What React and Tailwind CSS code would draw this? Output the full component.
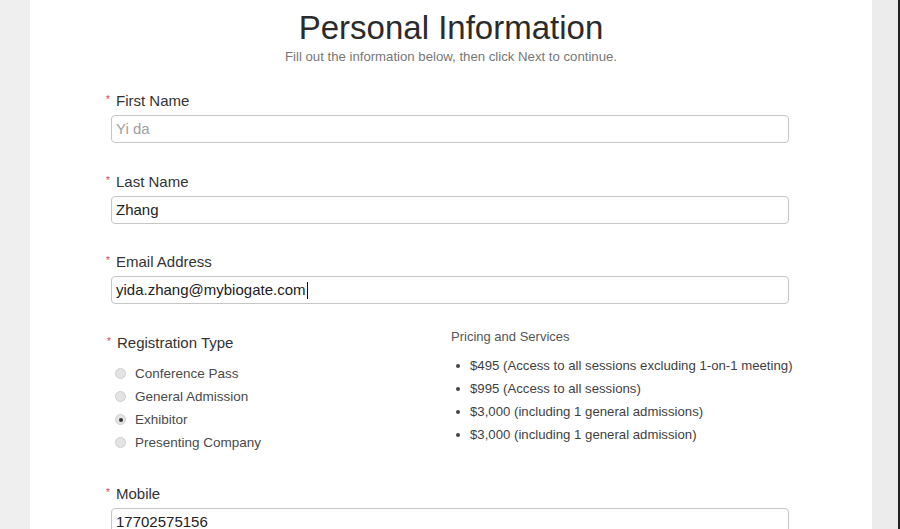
const FONT = { fontFamily: '"Liberation Sans", Arial, sans-serif' };

function Label({ children, extra = "" }) {
  return (
    <div className={`flex items-start h-[20px] leading-[20px] text-[15px] text-[#333] ${extra}`}>
      <span className="w-[10px] -ml-[10px] text-[10px] leading-[12px] text-[#d0464a] pt-[3px]">*</span>
      <span>{children}</span>
    </div>
  );
}

function Field({ label, value, placeholder, caret, className = "" }) {
  return (
    <div className={className}>
      <div className="pl-[5px]">
        <Label>{label}</Label>
      </div>
      <div className="mt-[4px] h-[28px] rounded-[4px] border border-[#c6c6c6] pl-[4px] flex items-center text-[15px] leading-[26px]">
        {value ? (
          <span className="text-[#222]">{value}</span>
        ) : (
          <span className="text-[#a0a0a0]">{placeholder}</span>
        )}
        {caret && <span className="inline-block w-px h-[17px] bg-[#111] ml-px" />}
      </div>
    </div>
  );
}

const regTypes = ["Conference Pass", "General Admission", "Exhibitor", "Presenting Company"];
const pricing = [
  "$495 (Access to all sessions excluding 1-on-1 meeting)",
  "$995 (Access to all sessions)",
  "$3,000 (including 1 general admissions)",
  "$3,000 (including 1 general admission)",
];

export default function App() {
  return (
    <div className="h-[529px] w-[900px] overflow-hidden flex bg-[#efefef]" style={FONT}>
      <div className="w-[30px] shrink-0 bg-[#efefef]" />
      <div className="w-[842px] shrink-0 bg-white">
        {/* Header */}
        <div className="pt-[8px] text-center">
          <h1 className="text-[33px] leading-[40px] text-[#2b2b2b]">Personal Information</h1>
          <p className="mt-[1px] text-[13.2px] leading-[16px] text-[#777]">
            Fill out the information below, then click Next to continue.
          </p>
        </div>

        <div className="w-[678px] ml-[81px] mt-[26px]">
          <Field label="First Name" placeholder="Yi da" />
          <Field className="mt-[28.5px]" label="Last Name" value="Zhang" />
          <Field className="mt-[28.5px]" label="Email Address" value="yida.zhang@mybiogate.com" caret />

          {/* Registration + pricing */}
          <div className="mt-[23.5px] grid grid-cols-2 items-start">
            <div className="pl-[6px]">
              <Label extra="mt-[5.5px]">Registration Type</Label>
              <div className="mt-[10px]">
                {regTypes.map((t) => (
                  <div key={t} className="flex items-center h-[23px] text-[13.5px] text-[#4a4a4a]">
                    <span className="w-[11px] h-[11px] rounded-full bg-[#e3e3e3] border border-[#cfcfcf] flex items-center justify-center -ml-[2px] -mt-[2px]">
                      {t === "Exhibitor" && <span className="w-[4px] h-[4px] rounded-full bg-[#333]" />}
                    </span>
                    <span className="ml-[9px]">{t}</span>
                  </div>
                ))}
              </div>
            </div>
            <div className="pl-[1px]">
              <div className="text-[13px] leading-[18px] text-[#555]">Pricing and Services</div>
              <ul className="mt-[9px]">
                {pricing.map((p, i) => (
                  <li key={i} className="flex items-center h-[23px] whitespace-nowrap text-[13.2px] text-[#3f3f3f]">
                    <span className="w-[4px] h-[4px] shrink-0 rounded-full bg-[#444] ml-[5px] mr-[10px]" />
                    {p}
                  </li>
                ))}
              </ul>
            </div>
          </div>

          <Field className="mt-[29px]" label="Mobile" value="17702575156" />
        </div>
      </div>
      <div className="w-[26px] shrink-0 bg-[#ececec]" />
      <div className="w-[2px] shrink-0 bg-[#222]" />
    </div>
  );
}
